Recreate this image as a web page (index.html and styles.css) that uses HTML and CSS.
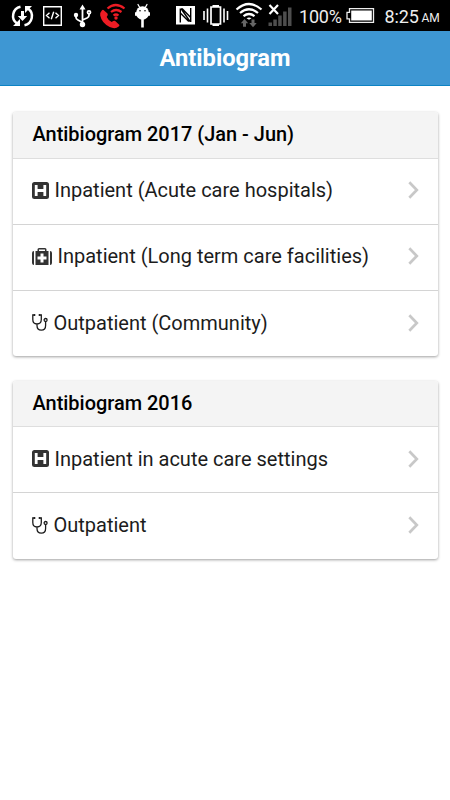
FILE: index.html
```html
<!DOCTYPE html>
<html lang="en">
<head>
<meta charset="utf-8">
<meta name="viewport" content="width=device-width, initial-scale=1">
<title>Antibiogram</title>
<link rel="stylesheet" href="styles.css">
</head>
<body>
<svg class="sprite" aria-hidden="true">
  <symbol id="hospital" viewBox="0 0 17 17"><path fill-rule="evenodd" d="M2.500 0h12q2.500 0 2.500 2.500v12q0 2.500-2.500 2.500h-12q-2.500 0-2.500-2.500v-12q0-2.500 2.500-2.500ZM2.800 3v11h2.800v-4h5.800v4h2.800V3h-2.800v4H5.600V3Z"/></symbol>
  <symbol id="medkit" viewBox="0 0 20 17"><path fill-rule="evenodd" d="M2 3v14Q0 17 0 15V5q0-2 2-2ZM18 3v14q2 0 2-2V5q0-2-2-2ZM3.500 3H5.500V1.500Q5.500 0 7 0h6q1.500 0 1.500 1.500V3h2v14h-13ZM7 1.500V3h6V1.500ZM8.500 5.500V8.500H5.500v3h3v3h3v-3h3v-3h-3v-3Z"/></symbol>
  <symbol id="stethoscope" viewBox="0 0 16 17"><g fill="none" stroke="currentColor" stroke-width="1.300"><path d="M2.800 1H.8v4.500q0 4.500 4.200 4.500t4.300-4.500V1H7.300M5 10v1.500q0 4.700 4.300 4.700t4.300-4.700V7.500"/><circle cx="13.600" cy="6" r="1.500"/></g><circle cx="2.500" cy="1.100" r="1"/><circle cx="7.500" cy="1.100" r="1"/></symbol>
  <symbol id="chevron" viewBox="0 0 11 18"><path d="M1.300 1.300 8.800 9l-7.500 7.700" fill="none" stroke="currentColor" stroke-width="2.700"/></symbol>
</svg>

<div class="status">
  <svg width="30" height="31" viewBox="8 0 30 31"><g fill="none" stroke="#fff" stroke-width="2.500"><path d="M20.500 6.800A9.300 9.300 0 0 0 17 23.500M24.500 25.200A9.300 9.300 0 0 0 28 8.500"/></g><path fill="#fff" d="M13 26h7v-7zM32 6h-7v7zM21 11h3v5h3.200l-4.700 5-4.700-5H21z"/></svg>
  <svg width="30" height="31" viewBox="38 0 30 31"><g fill="none" stroke="#fff" stroke-width="1.400"><path d="M43.700 6.700h17.600v18.600H43.700zM49.500 12.700l-3 2.800 3 2.800M55.500 12.700l3 2.800-3 2.800M53.700 11.800l-2.400 7.400"/></g></svg>
  <svg width="28" height="31" viewBox="68 0 28 31"><g fill="none" stroke="#fff" stroke-width="1.800"><path d="M82.500 8v16M76 15v2.500q0 1.500 2 2.500l4.500 2.500M89 14v1.500q0 1.500-2 2.500l-4.500 2"/><circle cx="89" cy="12.300" r="1.500"/></g><path fill="#fff" d="m82.500 4.500 3 5h-6z"/><circle cx="76" cy="15" r="2.200" fill="#fff"/><circle cx="82.500" cy="24.500" r="2.700" fill="#fff"/></svg>
  <svg width="34" height="31" viewBox="96 0 34 31"><path fill="#ed1c24" d="m103.500 10 4 3.500q1 1-.8 3.500 1.500 3.500 5 5 2.500-2 3.500-1l4 3.700q.8.800-.5 1.800-3.500 3-9 .5-8-4-9.500-11.500-.3-3 1.800-5.200.8-1 1.500-.3Z"/><g fill="none" stroke="#ed1c24" stroke-width="2.200"><path d="M107.500 8.500q8-7 17 0M111 12q5-4 10.500 0M113.500 15.500q2.500-2 5 0"/></g><circle cx="116" cy="18" r="1.700" fill="#ed1c24"/></svg>
  <svg width="42" height="31" viewBox="130 0 42 31"><ellipse cx="142.500" cy="13" rx="6.500" ry="6.800" fill="#fff"/><path fill="none" stroke="#fff" stroke-width="1.300" stroke-linecap="round" d="m138 4.500 2 3.500M147 4.500 145 8"/><path stroke="#fff" stroke-width="2" stroke-linecap="round" d="M136 13v2M149 13v2"/><path fill="#fff" d="M141.200 19h2.600v8.500h-2.600z"/><circle cx="140" cy="10.800" r=".8"/><circle cx="145" cy="10.800" r=".8"/></svg>
  <svg width="28" height="31" viewBox="172 0 28 31"><path fill="#fff" d="M176 6h19v18.500h-19z"/><path fill="none" stroke="#000" stroke-width="1.400" d="M180.300 22.500V8.500M180.300 13l8.500 8.500M190.700 8v14M190.700 17.500 182 8.500M181 8.500l9 13"/></svg>
  <svg width="32" height="31" viewBox="200 0 32 31"><g fill="none" stroke="#fff"><path stroke-width="1.700" d="M211 7h9.500v17H211z"/><path stroke-width="1.600" d="M207.500 8.500v14M204 11v9M224 8.500v14M227.500 11v9"/></g><path fill="#fff" d="M212.500 5h6.500v2h-6.500zM212.500 24h6.500v2h-6.500z"/></svg>
  <svg width="34" height="31" viewBox="232 0 34 31"><g fill="none" stroke="#fff" stroke-width="2.200"><path d="M236.500 9.500q12.500-11 25 0M240 13q9-7.500 18 0M243.500 16.200q5.500-4.400 11 0"/></g><path fill="#fff" d="m246.500 18.200 2.500 1.600 2.500-1.600q-2.500-1.400-5 0Z"/><path fill="#666" d="m244.500 19 3.700 4.200H246v3.600h-3v-3.600h-2.200zM253 27.300l-3.700-4.200h2.200v-3.600h3v3.600h2.200z"/></svg>
  <svg width="33" height="31" viewBox="266 0 33 31"><path fill="#4e4e4e" d="M268.500 22.500h3.500V26h-3.500zM273.300 19.500h3.500V26h-3.500zM278.200 15.500h3.500V26h-3.500zM283.100 11.500h3.500V26h-3.500zM288 7.500h3.500V26H288z"/><path stroke="#fff" stroke-width="2.200" d="m269.500 5 8.500 9M278 5l-8.500 9"/></svg>
  <span class="percent">100%</span>
  <svg width="31" height="31" viewBox="345 0 31 31"><path fill="none" stroke="#eee" stroke-width="1.300" d="M349.500 8.700h24v13.600h-24v-3.500H347v-6.500h2.500z"/><path fill="#fff" d="M351.200 10.500h20.600v10h-20.600z"/></svg>
  <span class="clock">8:25</span><span class="ampm">AM</span>
</div>

<header class="bar"><h1 class="title">Antibiogram</h1></header>

<main class="content">
  <section class="card">
    <h2 class="card-head">Antibiogram 2017 (Jan - Jun)</h2>
    <a class="row"><svg class="hospital"><use href="#hospital"/></svg><span class="label">Inpatient (Acute care hospitals)</span><svg class="chevron"><use href="#chevron"/></svg></a>
    <a class="row"><svg class="medkit"><use href="#medkit"/></svg><span class="label">Inpatient (Long term care facilities)</span><svg class="chevron"><use href="#chevron"/></svg></a>
    <a class="row"><svg class="stethoscope"><use href="#stethoscope"/></svg><span class="label">Outpatient (Community)</span><svg class="chevron"><use href="#chevron"/></svg></a>
  </section>
  <section class="card">
    <h2 class="card-head">Antibiogram 2016</h2>
    <a class="row"><svg class="hospital"><use href="#hospital"/></svg><span class="label">Inpatient in acute care settings</span><svg class="chevron"><use href="#chevron"/></svg></a>
    <a class="row"><svg class="stethoscope"><use href="#stethoscope"/></svg><span class="label">Outpatient</span><svg class="chevron"><use href="#chevron"/></svg></a>
  </section>
</main>
</body>
</html>
```
FILE: styles.css
```css
* { box-sizing: border-box; }
body {
  margin: 0;
  min-height: 800px;
  background: #fff;
  color: #1c1c1c;
  font-family: Roboto, "Liberation Sans", sans-serif;
}
.sprite { display: none; }
.status {
  display: flex;
  align-items: center;
  height: 31px;
  padding-left: 8px;
  background: #000;
  color: #eee;
  white-space: nowrap;
}
.status svg { flex: none; }
.percent { width: 46px; font-size: 18px; line-height: 31px; padding-top: 2px; letter-spacing: -.2px; }
.clock { width: 37px; margin-left: 8.500px; font-size: 18px; line-height: 31px; padding-top: 2px; letter-spacing: -.1px; }
.ampm { font-size: 12px; line-height: 31px; padding-top: 6px; }
.bar {
  height: 55px;
  background: #3e97d3;
  border-bottom: 1px solid #0c83c4;
  text-align: center;
}
.title {
  margin: 0;
  color: #fff;
  font-size: 23.700px;
  font-weight: 700;
  line-height: 55px;
}
.content {
  display: flex;
  flex-direction: column;
  gap: 24.500px;
  padding: 26px 12.500px 0;
}
.card {
  overflow: hidden;
  border-radius: 3px;
  background: #fff;
  box-shadow: 0 1px 3px rgba(0, 0, 0, .38);
}
.card-head {
  height: 46.600px;
  margin: 0;
  padding-left: 20px;
  border-bottom: 1px solid #dedede;
  background: #f4f4f4;
  color: #000;
  font-size: 19.950px;
  font-weight: 500;
  line-height: 44.500px;
}
.row {
  display: flex;
  align-items: center;
  height: 66px;
  padding: 0 18.500px 1.500px 19.500px;
  border-bottom: 1px solid #d4d4d4;
}
.row:last-child { height: 65.500px; border-bottom: 0; }
.row svg { flex: none; fill: currentColor; }
.hospital { width: 17px; height: 17px; margin-right: 5.500px; color: #333; }
.medkit { width: 20px; height: 17px; margin-right: 5.500px; color: #333; }
.stethoscope { width: 16px; height: 17px; margin-right: 5.500px; }
.label { flex: 1; font-size: 20px; white-space: nowrap; }
.row .chevron { width: 11px; height: 18px; color: #c8c8c8; }
```
